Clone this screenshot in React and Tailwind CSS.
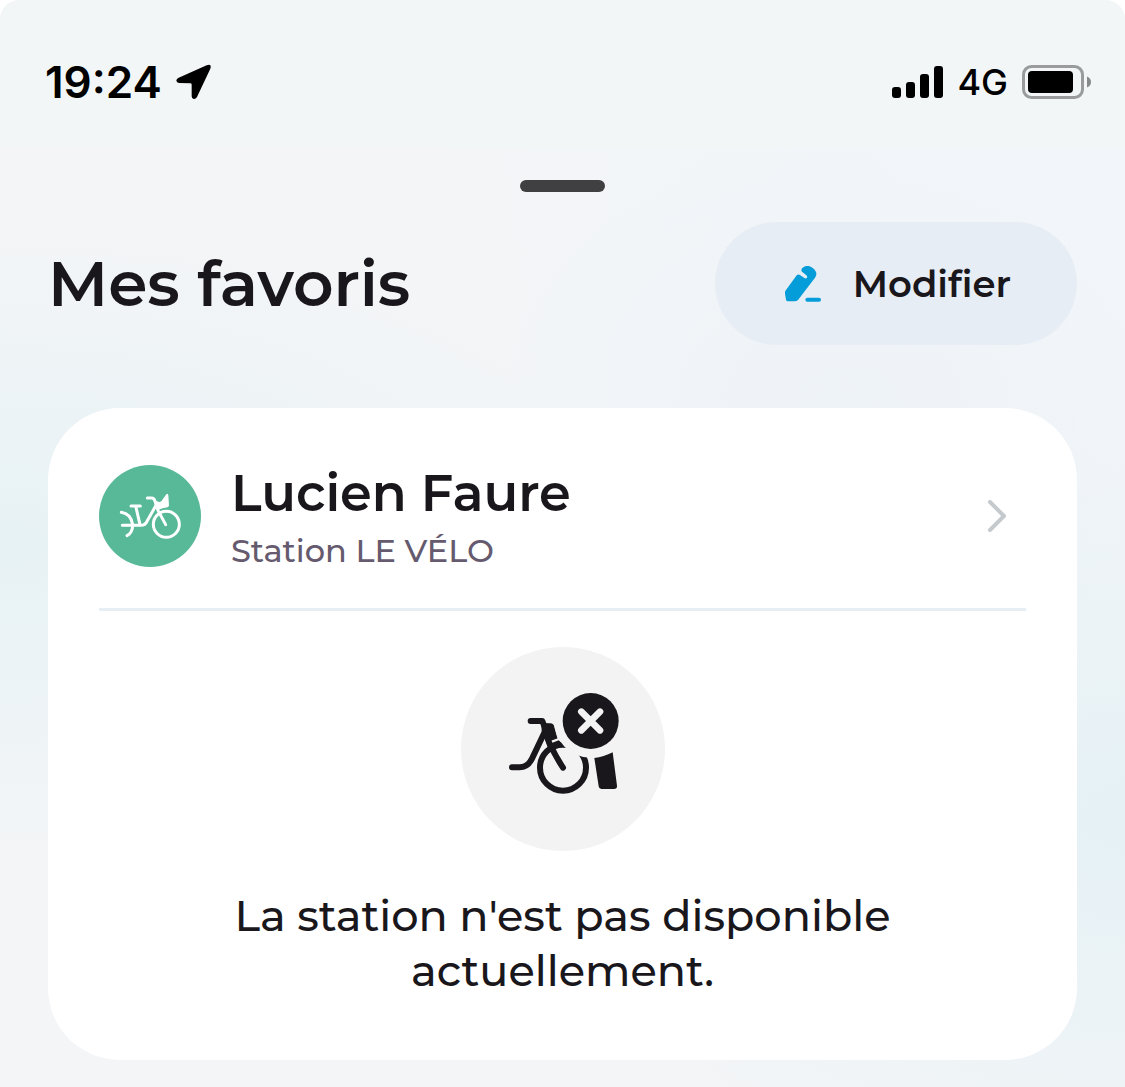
function LocationIcon() {
  return (
    <svg viewBox="440 45 105 108" className="h-9 w-[35px]" aria-hidden="true">
      <path
        d="M448 86 L532 49 Q548 43 543 59 L503 144 Q499 151 493 150 Q487 149 487 142 L487 107 Q487 103 483 103 L449 102 Q442 101 441 95 Q441 89 448 86Z"
        fill="#000"
      />
    </svg>
  )
}

function SignalIcon() {
  return (
    <svg viewBox="0 0 51 32" className="h-8 w-[51px]" aria-label="Signal">
      <rect x="0" y="21" width="9" height="11" rx="3" />
      <rect x="14" y="16" width="9" height="16" rx="3" />
      <rect x="28" y="8" width="9" height="24" rx="3" />
      <rect x="42" y="0" width="9" height="32" rx="3" />
    </svg>
  )
}

function BatteryIcon() {
  return (
    <svg viewBox="0 0 69 34" className="h-[34px] w-[69px]" aria-label="Batterie">
      <rect x="1.5" y="1.5" width="59" height="31" rx="8" fill="none" stroke="#999b9c" strokeWidth="3" />
      <rect x="6" y="6" width="45" height="22" rx="4" />
      <path d="M65 11.5 Q69 13 69 17 Q69 21 65 22.5Z" fill="#87898a" />
    </svg>
  )
}

function PencilIcon() {
  return (
    <svg viewBox="45 42 108 108" className="size-9" aria-hidden="true">
      <path
        d="M97 48 Q107 38 122 44 Q136 51 139 63 Q140 70 135 77 L84 144 Q80 148 73 148 L54 148 Q49 148 48 143 L45 125 Q44 119 48 114 L79 71 Q84 65 90 69 L103 78 Q108 81 111 77 Q113 73 109 70 L97 60 Q91 55 97 48Z"
        fill="#059dd9"
      />
      <path d="M112 143 H147" stroke="#059dd9" strokeWidth="12" strokeLinecap="round" />
    </svg>
  )
}

function BikeIcon() {
  return (
    <svg viewBox="12 15 306 306" className="size-[102px] shrink-0" aria-hidden="true">
      <circle cx="165" cy="168" r="153" fill="#58b998" />
      <g fill="none" stroke="#fff" strokeWidth="9" strokeLinecap="round" strokeLinejoin="round">
        <circle cx="214" cy="193" r="39" />
        <path d="M79 157 Q108 161 113 194 Q113 218 96 227" />
        <path d="M82 196 H137 Q151 196 156 184 L183 136" />
        <path d="M108 138 H136 M122 138 L135 194" />
        <path d="M157 114 H170 Q176 114 179 121 L189 151 L212 194" />
      </g>
      <path d="M180 125 L187 124 Q194 129 200 122 L214 103 Q219 98 220 106 L222 136 Q222 141 217 142 Q202 144 190 150Z" fill="#fff" />
    </svg>
  )
}

function UnavailableIcon() {
  return (
    <svg viewBox="18 21 612 612" className="size-[204px]" aria-hidden="true">
      <circle cx="324" cy="327" r="306" fill="#f3f3f3" />
      <g fill="none" stroke="#19171c" strokeWidth="18" strokeLinecap="round" strokeLinejoin="round">
        <circle cx="324" cy="383" r="69" />
        <path d="M227 243 H262 L270 264 Q280 316 324 383" />
        <path d="M171 382 H194 Q218 382 231 356 L269 276" />
      </g>
      <path d="M259 249 L286 250 Q296 251 298 260 L308 298 L330 318 L290 325 L278 322 L260 273Z" fill="#19171c" />
      <path d="M291 305 L312 297" stroke="#f3f3f3" strokeWidth="7" />
      <circle cx="407" cy="243" r="110" fill="#f3f3f3" />
      <circle cx="407" cy="243" r="84" fill="#19171c" />
      <path d="M379 215 L435 271 M435 215 L379 271" stroke="#f3f3f3" strokeWidth="20" strokeLinecap="round" />
      <path d="M418 354 Q446 351 473 337 L486 437 Q487 447 477 447 H439 Q432 447 431 439Z" fill="#19171c" />
    </svg>
  )
}

function ChevronIcon() {
  return (
    <svg viewBox="0 0 18 32" className="h-8 w-[18px]" aria-hidden="true">
      <path d="M2 2 L16 16 L2 30" fill="none" stroke="#c5cacf" strokeWidth="4" strokeLinecap="round" strokeLinejoin="round" />
    </svg>
  )
}

function StatusBar() {
  return (
    <div className="bg-[#f2f6f7] pt-12 pr-[34px] pb-8 pl-[45px] font-['Inter',sans-serif] text-black">
      <div className="flex h-[68px] items-center justify-between">
        <div className="flex items-center gap-[14px]">
          <span className="text-[44px] leading-none font-semibold">19:24</span>
          <LocationIcon />
        </div>
        <div className="flex items-center gap-[14px]">
          <SignalIcon />
          <span className="text-[36px] leading-none font-medium">4G</span>
          <BatteryIcon />
        </div>
      </div>
    </div>
  )
}

function StationCard({ name, kind, message }) {
  return (
    <section className="rounded-[72px] bg-white px-[51px] pt-[50px] pb-[62px]">
      <a href="#station" className="flex items-center gap-[30px] pr-5">
        <BikeIcon />
        <div className="flex-1">
          <h2 className="text-[51px] leading-[70px] font-semibold">{name}</h2>
          <p className="text-[32px] leading-[46px] font-medium text-[#655a6e]">{kind}</p>
        </div>
        <ChevronIcon />
      </a>
      <hr className="mt-[34px] border-t-[3px] border-[#e7eff5]" />
      <div className="mt-9 flex flex-col items-center">
        <UnavailableIcon />
        <p className="mt-[37px] max-w-[700px] text-center text-[43px] leading-[55px] font-medium">{message}</p>
      </div>
    </section>
  )
}

export default function App() {
  return (
    <div className="min-h-screen bg-white font-['Montserrat','Inter',sans-serif] text-[#19171c]">
      <div className="min-h-screen overflow-hidden rounded-t-[20px] bg-[#f3f5f7] bg-[radial-gradient(ellipse_at_0%_50%,#e7f2f5_0%,transparent_40%),radial-gradient(ellipse_at_100%_75%,#e5f1f5_0%,transparent_35%),radial-gradient(ellipse_at_75%_38%,#eef3f7_0%,transparent_30%),radial-gradient(ellipse_at_100%_15%,#f2f6fa_0%,transparent_45%)]">
        <StatusBar />
        <main className="px-12 pt-8 pb-7">
          <div className="mx-auto h-3 w-[85px] rounded-full bg-[#403f42]" />
          <header className="mt-[30px] flex items-center justify-between">
            <h1 className="text-[63px] leading-[80px] font-semibold">Mes favoris</h1>
            <button
              type="button"
              className="flex h-[123px] items-center gap-8 rounded-full bg-[#e6edf4] pr-[66px] pl-[70px] text-[37px] font-semibold"
            >
              <PencilIcon />
              Modifier
            </button>
          </header>
          <div className="mt-[63px]">
            <StationCard
              name="Lucien Faure"
              kind="Station LE VÉLO"
              message="La station n'est pas disponible actuellement."
            />
          </div>
        </main>
      </div>
    </div>
  )
}
